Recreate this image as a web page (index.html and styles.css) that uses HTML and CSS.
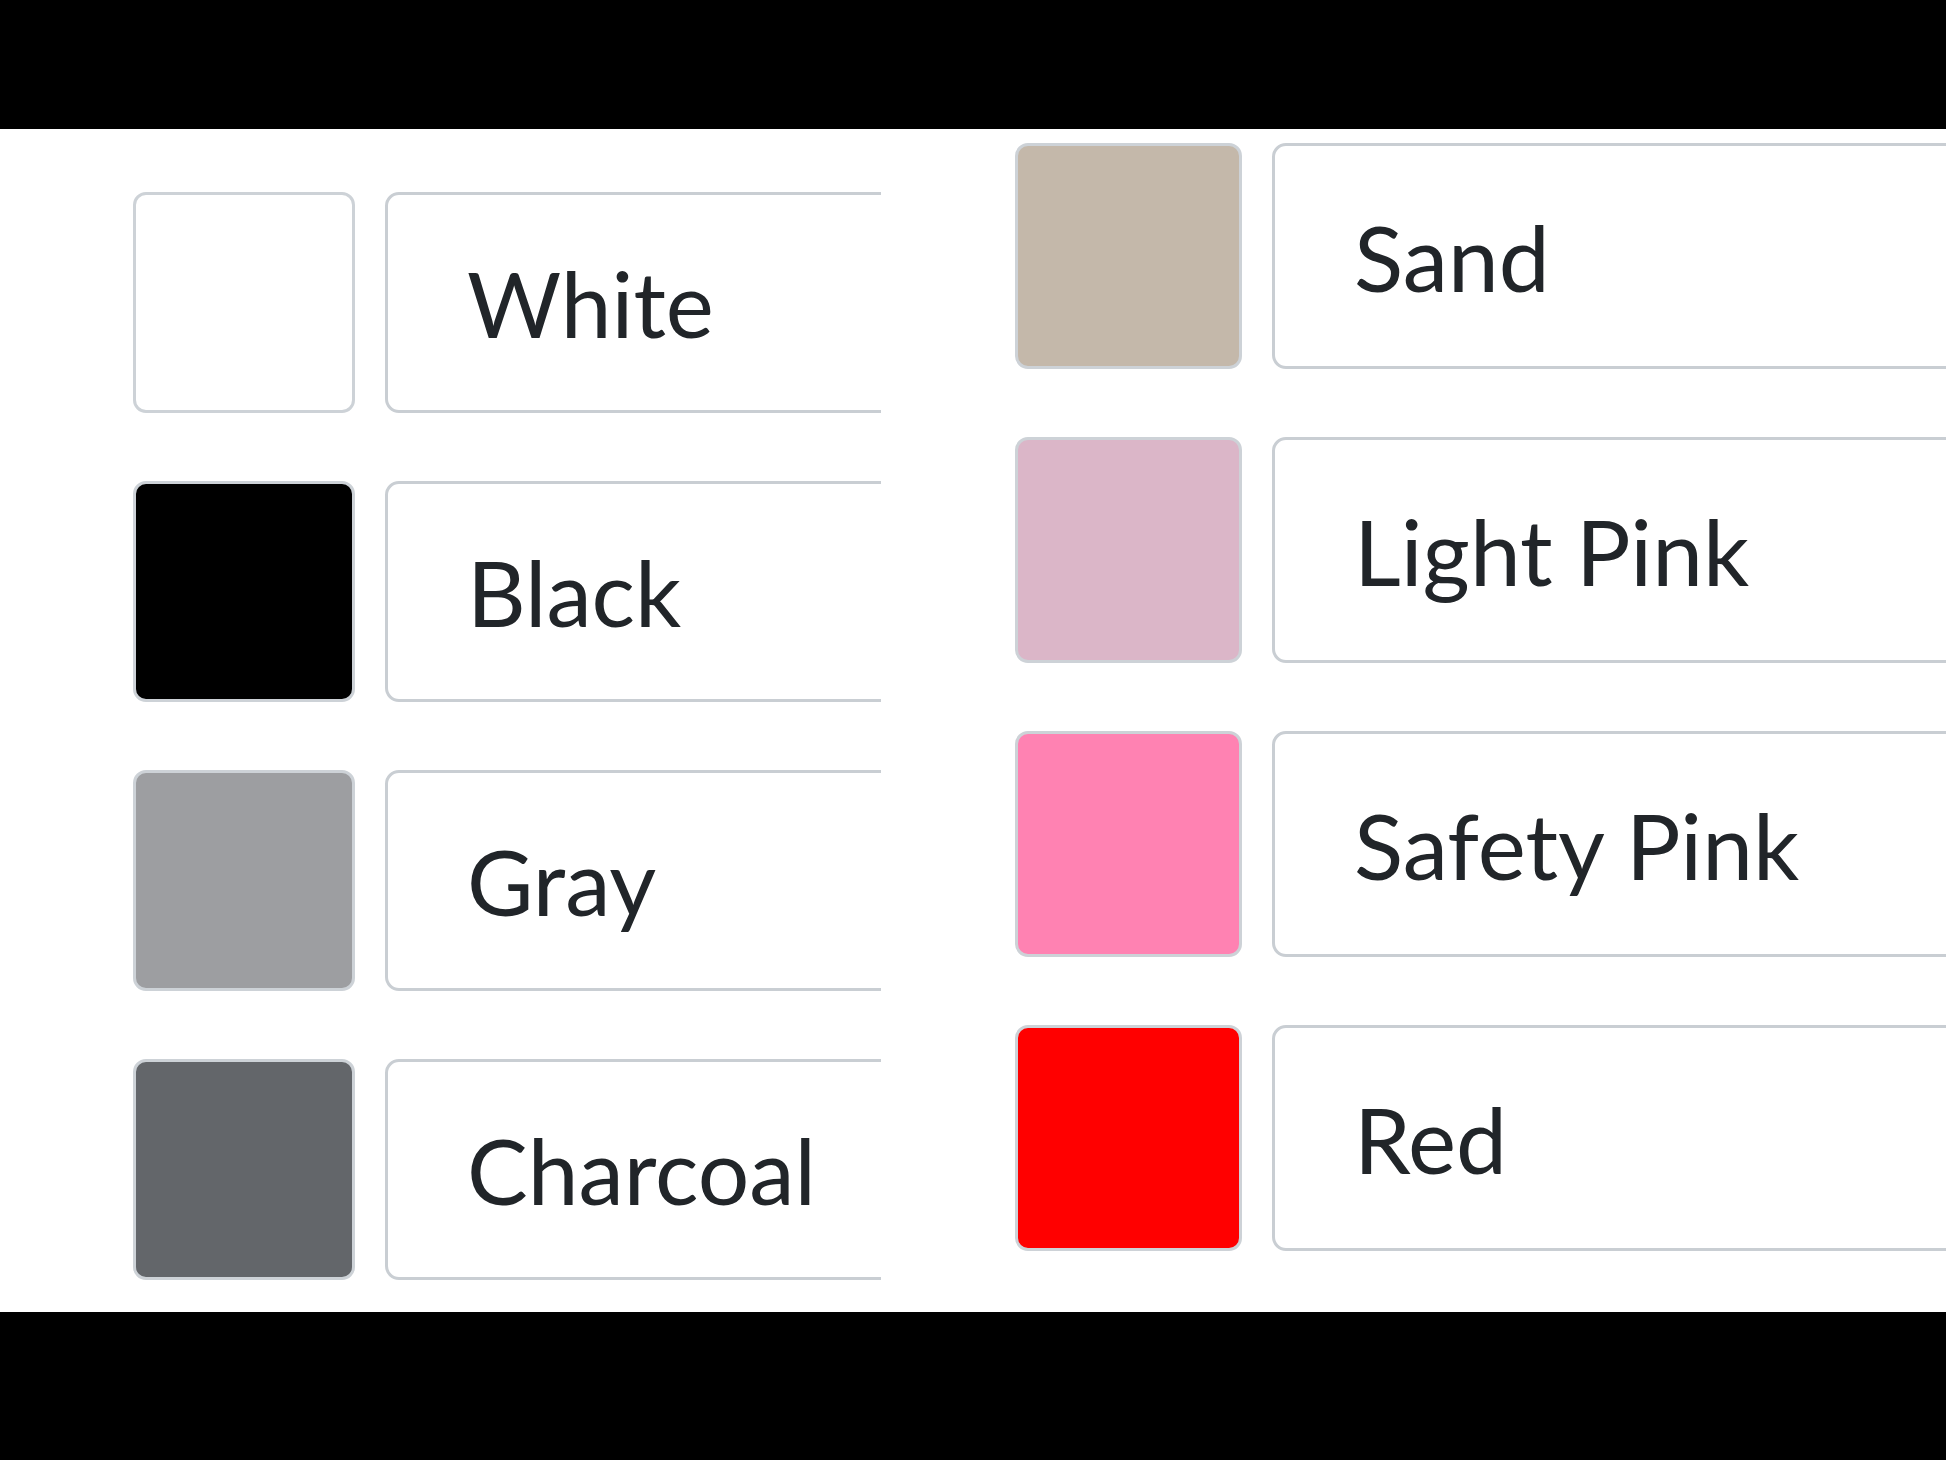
FILE: index.html
```html
<!DOCTYPE html>
<html lang="en">
<head>
    <meta charset="UTF-8">
    <meta name="viewport" content="width=device-width, initial-scale=1.0">
    <title>Colour Options</title>
    <link rel="stylesheet" href="styles.css">
</head>
<body>
    <div class="stage">
        <div class="panel panel-left">
            <div class="row">
                <div class="swatch white"></div>
                <input type="text" class="name" value="White">
            </div>
            <div class="row">
                <div class="swatch black"></div>
                <input type="text" class="name" value="Black">
            </div>
            <div class="row">
                <div class="swatch gray"></div>
                <input type="text" class="name" value="Gray">
            </div>
            <div class="row">
                <div class="swatch charcoal"></div>
                <input type="text" class="name" value="Charcoal">
            </div>
        </div>
        <div class="panel panel-right">
            <div class="row">
                <div class="swatch sand"></div>
                <input type="text" class="name" value="Sand">
            </div>
            <div class="row">
                <div class="swatch light-pink"></div>
                <input type="text" class="name" value="Light Pink">
            </div>
            <div class="row">
                <div class="swatch safety-pink"></div>
                <input type="text" class="name" value="Safety Pink">
            </div>
            <div class="row">
                <div class="swatch red"></div>
                <input type="text" class="name" value="Red">
            </div>
        </div>
    </div>
</body>
</html>
```

FILE: styles.css
```css
* {
    margin: 0;
    padding: 0;
    box-sizing: border-box;
    font-family: Lato, 'Open Sans', sans-serif;
}

body {
    background: #000;
    height: 1460px;
    overflow: hidden;
}

.stage {
    display: flex;
    margin-top: 129px;
    height: 1183px;
}

.panel {
    background: #fff;
    display: flex;
    flex-direction: column;
    overflow: hidden;
}

.panel-left {
    width: 881px;
    padding: 63px 0 0 133px;
    gap: 68px;
}

.panel-right {
    flex: 1;
    padding: 14px 0 0 134px;
    gap: 68px;
}

.row {
    display: flex;
    gap: 30px;
    flex-shrink: 0;
}

.swatch {
    width: 222px;
    height: 221px;
    border: 3px solid #cdd2d7;
    border-radius: 13px;
    flex-shrink: 0;
}

.panel-right .swatch {
    width: 227px;
    height: 226px;
}

.name {
    width: 900px;
    flex-shrink: 0;
    height: 221px;
    border: 3px solid #c9ced3;
    border-radius: 14px;
    outline: 0;
    background: #fff;
    color: #212529;
    padding: 0 0 0 79px;
    font-size: 91px;
}

.panel-right .name {
    height: 226px;
}

.white { background: #fff; }
.black { background: #000; }
.gray { background: #9d9ea1; }
.charcoal { background: #63666a; }
.sand { background: #c4b8aa; }
.light-pink { background: #dbb6c8; }
.safety-pink { background: #ff82b2; }
.red { background: #ff0000; }
```
